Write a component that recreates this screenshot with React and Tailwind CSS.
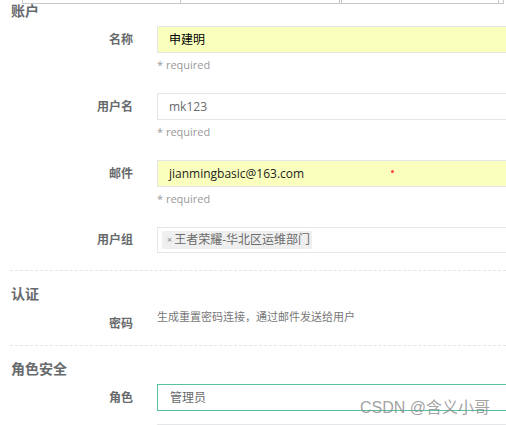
import React from 'react'

const cjk = "font-['Open_Sans','Noto_Sans_CJK_SC',sans-serif]"

const Field = ({ label, children, required, box = 'border-[#e5e6e7] pl-[11px]', h = 'h-[27px]' }) => (
  <div className="flex">
    <div className={`w-[133px] shrink-0 text-right text-[12px] font-bold text-[#676a6c] ${h} flex items-center justify-end`}>
      {label}
    </div>
    <div className="ml-[24px] w-[380px] shrink-0">
      <div className={`${h} border flex items-center relative ${box}`}>
        {children}
      </div>
      {required && (
        <p className="mt-[4px] h-[16px] leading-[16px] text-[11px] text-[#9a9a9a]">* required</p>
      )}
    </div>
  </div>
)

const Heading = ({ children, className = '' }) => (
  <h3 className={`pl-[11px] h-[14px] leading-[14px] text-[14px] font-bold text-[#676a6c] ${className}`}>
    {children}
  </h3>
)

const Divider = ({ className = '' }) => (
  <div className={`ml-[10px] border-t border-dashed border-[#e2e4e6] ${className}`} />
)

export default function App() {
  return (
    <div className={`relative w-[506px] h-[425px] overflow-hidden bg-white ${cjk}`}>
      {/* bottom of the table above */}
      <div className="ml-[22px] w-[482px] h-[4px] border-x border-b border-[#c8c8c8] flex">
        <div className="w-[158px] border-r border-[#c8c8c8]" />
        <div className="w-[161px] border-r-[3px] border-double border-[#c8c8c8]" />
        <div className="w-[157px] border-r border-[#c8c8c8]" />
      </div>

      <Heading>账户</Heading>

      <div className="mt-[8px] flex flex-col gap-[20px]">
        <Field label="名称" required box="border-[#e5e6e7] bg-[#faffbd] pl-[11px]">
          <span className="text-[12px] text-black">申建明</span>
        </Field>
        <Field label="用户名" required>
          <span className="text-[12px] text-[#676a6c]">mk123</span>
        </Field>
        <Field label="邮件" required box="border-[#e5e6e7] bg-[#faffbd] pl-[11px]">
          <span className="text-[12px] text-[#222]">jianmingbasic@163.com</span>
          <span className="absolute left-[233px] top-[9px] w-[3px] h-[3px] rounded-full bg-[#ff4040]" />
        </Field>
        <Field label="用户组" h="h-[26px]" box="border-[#e5e6e7] pl-[4px]">
          <span className="h-[18px] w-[150px] flex items-center bg-[#efefef] rounded-[2px] pl-[5px] text-[12px] text-[#6b6b6b] whitespace-nowrap overflow-hidden">
            <span className="text-[9px] mr-[2px] text-[#888]">×</span>王者荣耀-华北区运维部门
          </span>
        </Field>
      </div>

      <Divider className="mt-[17px]" />
      <Heading className="mt-[16px]">认证</Heading>

      <div className="mt-[9px] flex h-[26px]">
        <div className="w-[133px] shrink-0 text-right text-[12px] font-bold text-[#676a6c] flex items-center justify-end pt-[1px]">
          密码
        </div>
        <p className="ml-[24px] leading-[14px] text-[11px] text-[#777]">
          生成重置密码连接，通过邮件发送给用户
        </p>
      </div>

      <Divider className="mt-[9px]" />
      <Heading className="mt-[16px]">角色安全</Heading>

      <div className="mt-[8px]">
        <Field label="角色" box="border-[#55c2a2] pl-[12px]">
          <span className="text-[12px] text-[#676a6c]">管理员</span>
        </Field>
      </div>
      <div className="mt-[13px] ml-[157px] h-[20px] border border-[#e5e6e7]" />

      <div className="absolute left-[360px] top-[398px] text-[16px] leading-[20px] text-[#8a8a8a]/80 font-['Liberation_Sans','Noto_Sans_CJK_SC',sans-serif]">
        CSDN @含义小哥
      </div>
    </div>
  )
}
